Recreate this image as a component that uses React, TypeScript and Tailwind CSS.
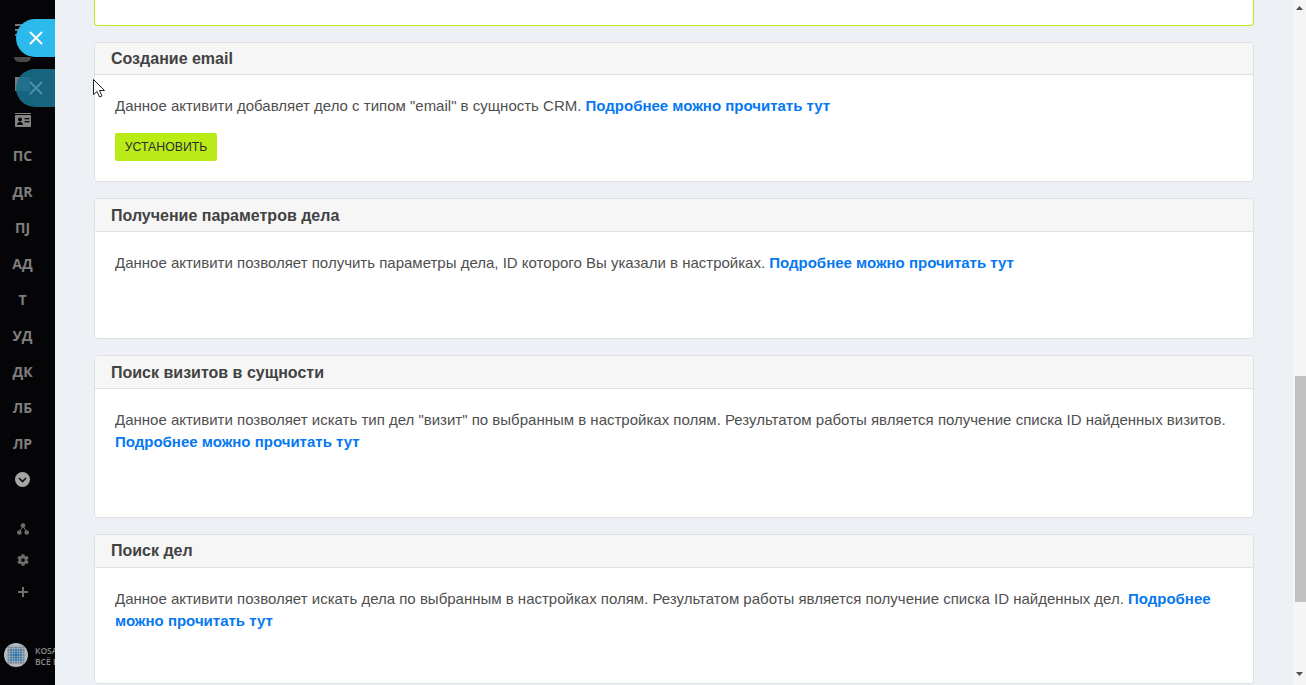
import { X } from 'lucide-react'
import { FaCog } from 'react-icons/fa'
import type { ReactNode } from 'react'

const navLabels = ['ПС', 'ДR', 'ПJ', 'АД', 'Т', 'УД', 'ДК', 'ЛБ', 'ЛР']

// logo dots: 7x7 grid, blue in the middle, grey towards the rim
const logoDots = Array.from({ length: 49 }, (_, i) => {
  const x = i % 7
  const y = Math.floor(i / 7)
  const dist = Math.max(Math.abs(x - 3), Math.abs(y - 3))
  return { x, y, dist }
})

type CardProps = {
  title: string
  height: string
  children: ReactNode
  install?: boolean
  titleClass?: string
  bodyClass?: string
}

function Card({ title, height, children, install, titleClass = 'h-[33px]', bodyClass = 'pt-5' }: CardProps) {
  return (
    <section className={`${height} shrink-0 overflow-hidden rounded-[4px] border border-[#dfe0e2] bg-white`}>
      <h2 className={`flex items-center border-b border-[#dfe0e2] bg-[#f6f6f6] pl-4 text-[16px] font-bold text-[#424242] ${titleClass}`}>
        {title}
      </h2>
      <div className={`px-5 ${bodyClass}`}>
        <p className="text-[15px] leading-[22px] text-[#4f4f4f]">{children}</p>
        {install && (
          <button className="mt-4 flex h-7 w-[102px] items-center justify-center rounded-[2px] bg-[#b9ec17] text-[12.3px] text-[#2c2c2c]">
            УСТАНОВИТЬ
          </button>
        )}
      </div>
    </section>
  )
}

function More({ children }: { children: ReactNode }) {
  return <a className="font-bold text-[#0678f0]">{children}</a>
}

function Sidebar() {
  return (
    <aside className="flex h-full w-[55px] shrink-0 flex-col items-center overflow-hidden bg-[#050508] pr-[10px] font-['Open_Sans',sans-serif] text-[#7f7f7f]">
      {/* hamburger */}
      <div className="mt-[24px] flex w-[16px] shrink-0 flex-col gap-[3px]">
        <span className="h-[2px] bg-[#777]" />
        <span className="h-[2px] bg-[#777]" />
        <span className="h-[2px] bg-[#777]" />
      </div>
      <div className="mt-[21px] h-[5px] w-[17px] shrink-0 rounded-b-full bg-[#4a4a4a]" />
      <div className="mt-[15px] h-[14px] w-[15px] shrink-0 bg-[#7a7a7a]" />
      {/* id card */}
      <svg className="mt-[22px] shrink-0" width="16" height="14" viewBox="0 0 16 14">
        <rect y="0" width="16" height="1" fill="#858585" />
        <rect y="2" width="16" height="12" rx="1" fill="#858585" />
        <circle cx="5" cy="6.500" r="2" fill="#050508" />
        <path d="M2 12c0-2 1.500-3 3-3s3 1 3 3z" fill="#050508" />
        <rect x="9.500" y="5" width="5" height="1.300" fill="#050508" />
        <rect x="9.500" y="8" width="5" height="1.300" fill="#050508" />
      </svg>
      <nav className="mt-[10px] flex shrink-0 flex-col items-center">
        {navLabels.map((label) => (
          <div key={label} className="flex h-9 items-center text-[14px] font-bold">
            {label}
          </div>
        ))}
      </nav>
      <div className="mt-[11px] flex size-[15px] shrink-0 items-center justify-center rounded-full bg-[#a5a5a5]">
        <svg width="9" height="6" viewBox="0 0 9 6" fill="none" stroke="#111" strokeWidth="1.600">
          <path d="M1 1l3.500 3.500L8 1" />
        </svg>
      </div>
      <svg className="mt-[36px] shrink-0" width="12" height="12" viewBox="0 0 12 12" fill="#6e6e6e">
        <circle cx="6" cy="2.500" r="2.300" />
        <circle cx="2.300" cy="9.500" r="2.300" />
        <circle cx="9.700" cy="9.500" r="2.300" />
        <path d="M5.500 4l-2.500 4M6.500 4l2.500 4" stroke="#6e6e6e" />
      </svg>
      <FaCog className="mt-[19px] shrink-0 text-[#6e6e6e]" size={12} />
      <svg className="mt-[21px] shrink-0" width="10" height="10" viewBox="0 0 10 10" fill="#6e6e6e">
        <rect x="4" width="2" height="10" />
        <rect y="4" width="10" height="2" />
      </svg>
      {/* logo */}
      <svg className="mt-auto mb-[18px] -ml-[14px] shrink-0" width="24" height="24" viewBox="0 0 24 24">
        <circle cx="12" cy="12" r="12" fill="#b4bbc0" />
        {logoDots.map((d) => (
          <rect
            key={`${d.x}-${d.y}`}
            x={3.500 + d.x * 2.500}
            y={3.500 + d.y * 2.500}
            width="2"
            height="2"
            fill={d.dist <= 1 ? '#1f6aa5' : d.dist === 2 ? '#3f7fae' : '#76858f'}
          />
        ))}
      </svg>
    </aside>
  )
}

export default function App() {
  return (
    <div className="relative flex h-[685px] w-[1306px] overflow-hidden bg-[#edf0f4] font-['Liberation_Sans',sans-serif]">
      <Sidebar />

      <main className="flex min-w-0 flex-1 flex-col gap-4 px-[39px]">
        <div className="h-[26px] shrink-0 rounded-b-[4px] border-x border-b border-[#b9ec17] bg-white" />
        <Card title="Создание email" height="h-[140px]" titleClass="h-[32px]" bodyClass="pt-5" install>
          Данное активити добавляет дело с типом "email" в сущность CRM. <More>Подробнее можно прочитать тут</More>
        </Card>
        <Card title="Получение параметров дела" height="h-[141px]" titleClass="h-[33px] pt-[2px]">
          Данное активити позволяет получить параметры дела, ID которого Вы указали в настройках. <More>Подробнее можно прочитать тут</More>
        </Card>
        <Card title="Поиск визитов в сущности" height="h-[163px]" titleClass="h-[33px] pt-[2px]">
          Данное активити позволяет искать тип дел "визит" по выбранным в настройках полям. Результатом работы является получение списка ID найденных визитов. <More>Подробнее можно прочитать тут</More>
        </Card>
        <Card title="Поиск дел" height="h-[150px]">
          Данное активити позволяет искать дела по выбранным в настройках полям. Результатом работы является получение списка ID найденных дел. <More>Подробнее можно прочитать тут</More>
        </Card>
      </main>

      {/* scrollbar */}
      <div className="flex w-[13px] shrink-0 flex-col items-center bg-[#f5f5f5]">
        <svg className="mt-[6px] shrink-0" width="7" height="4" viewBox="0 0 7 4"><path d="M3.500 0L7 4H0z" fill="#505050" /></svg>
        <div className="mt-[366px] ml-[2px] h-[226px] w-[11px] shrink-0 bg-[#c1c1c1]" />
        <svg className="mt-[70px] shrink-0" width="7" height="4" viewBox="0 0 7 4"><path d="M3.500 4L7 0H0z" fill="#505050" /></svg>
      </div>

      {/* floating widgets over the sidebar */}
      <button className="absolute top-[19px] left-[16px] flex h-[38px] w-[39px] items-center justify-center rounded-l-[19px] bg-[#2cb9ec] text-white">
        <X size={22} strokeWidth={2.200} />
      </button>
      <button className="absolute top-[69px] left-[16px] flex h-[38px] w-[39px] items-center justify-center rounded-l-[19px] bg-[#1a6f8e]/90 text-[#4d8ea6]">
        <X size={22} strokeWidth={2.200} />
      </button>

      <div className="absolute top-[645px] left-[35px] w-[20px] overflow-hidden font-['Open_Sans',sans-serif] text-[8.500px] leading-[11px] font-semibold whitespace-nowrap text-[#8a8a8a]">
        <div>KOSA</div>
        <div>ВСЁ ЕЩЁ</div>
      </div>

      {/* mouse cursor */}
      <svg className="absolute top-[79px] left-[93px]" width="13" height="20" viewBox="0 0 13 20">
        <path d="M0.500 0.500V15.500L4 12.500L6.500 18L9 17L6.500 11.500H11.500Z" fill="#fff" stroke="#222" strokeWidth="1" />
      </svg>
    </div>
  )
}
